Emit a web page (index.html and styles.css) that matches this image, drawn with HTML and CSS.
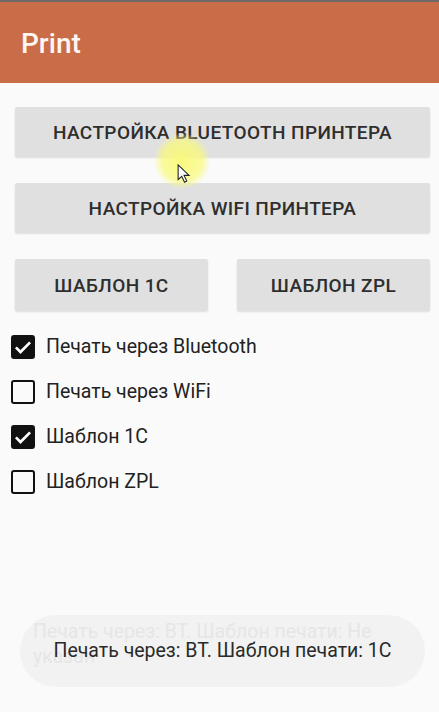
FILE: index.html
```html
<!doctype html>
<html lang="ru">
<head>
    <meta charset="UTF-8">
    <title>Print</title>
    <link rel="stylesheet" href="styles.css">
</head>
<body>
<div class="screen">
    <div class="topline"></div>
    <div class="appbar">Print</div>
    <div class="content">
        <div class="btn">Настройка Bluetooth принтера</div>
        <div class="btn">Настройка WiFi принтера</div>
        <div class="btn-row">
            <div class="btn">Шаблон 1С</div>
            <div class="btn">Шаблон ZPL</div>
        </div>
        <div class="checks">
            <div class="check on"><span class="box"><svg viewBox="0 0 24 24"><path d="M3.5 12.5l5.5 5.5L20.5 6.5"/></svg></span>Печать через Bluetooth</div>
            <div class="check"><span class="box"></span>Печать через WiFi</div>
            <div class="check on"><span class="box"><svg viewBox="0 0 24 24"><path d="M3.5 12.5l5.5 5.5L20.5 6.5"/></svg></span>Шаблон 1С</div>
            <div class="check"><span class="box"></span>Шаблон ZPL</div>
        </div>
    </div>
    <div class="toast">
        <div class="toast-old">Печать через: ВТ. Шаблон печати: Не указан</div>
        <div class="toast-text">Печать через: ВТ. Шаблон печати: 1С</div>
    </div>
    <div class="pointer">
        <svg viewBox="0 0 16 22" width="15" height="20"><path d="M1 1v16l4-3.5 3 6.5 2.5-1.2-3-6.3h5.5z"/></svg>
    </div>
</div>
</body>
</html>
```

FILE: styles.css
```css
html,body{
    margin:0px;
    padding:0px;
    width:100%;
    height:100%;
    background:#fafafa;
}
.screen{
    position:relative;
    height:712px;
    overflow:hidden;
    font-family:Roboto,"Noto Sans",sans-serif;
    color:#212121;
}
.topline{
    height:2px;
    background:#6f6a66;
}
.appbar{
    height:81px;
    background:#c96d48;
    color:#fdf6f2;
    font-size:28px;
    font-weight:500;
    line-height:84px;
    padding-left:21px;
    box-sizing:border-box;
}
.content{
    padding:24px 9px 0 15px;
}
.btn{
    height:50px;
    background:#e0e0e0;
    border-radius:2px;
    box-shadow:0 1px 2px rgba(0,0,0,0.12);
    text-transform:uppercase;
    font-size:19px;
    font-weight:500;
    letter-spacing:0.4px;
    color:#2e2e2e;
    display:flex;
    align-items:center;
    justify-content:center;
    margin-bottom:26px;
}
.btn-row{
    display:flex;
    gap:29px;
}
.btn-row .btn{
    flex:1;
    height:52px;
    margin-bottom:0;
}
.checks{
    margin-left:-4px;
    padding-top:13px;
}
.check{
    display:flex;
    align-items:center;
    height:45px;
    font-size:19.5px;
    color:#222;
}
.box{
    width:20px;
    height:20px;
    border:2px solid #111;
    border-radius:3px;
    margin-right:11px;
    display:flex;
}
.check.on .box{
    background:#111;
}
.box svg{
    width:20px;
    height:20px;
    fill:none;
    stroke:#fff;
    stroke-width:3.2;
}
.toast{
    position:absolute;
    left:20px;
    right:14px;
    top:615px;
    height:72px;
    border-radius:36px;
    background:#f2f2f2;
}
.toast-old{
    position:absolute;
    left:13px;
    top:4px;
    width:350px;
    font-size:19.5px;
    line-height:25px;
    color:#e6e6e6;
}
.toast-text{
    position:absolute;
    left:0;
    right:0;
    top:24px;
    text-align:center;
    font-size:19.5px;
    color:#2a2a2a;
}
.pointer{
    position:absolute;
    left:154px;
    top:133px;
    width:56px;
    height:56px;
    border-radius:50%;
    background:radial-gradient(circle,rgba(250,250,120,0.95) 0%,rgba(250,250,120,0.7) 50%,rgba(250,250,120,0) 72%);
}
.pointer svg{
    position:absolute;
    left:23px;
    top:31px;
    fill:#fff;
    stroke:#222;
    stroke-width:1.2;
}
```
